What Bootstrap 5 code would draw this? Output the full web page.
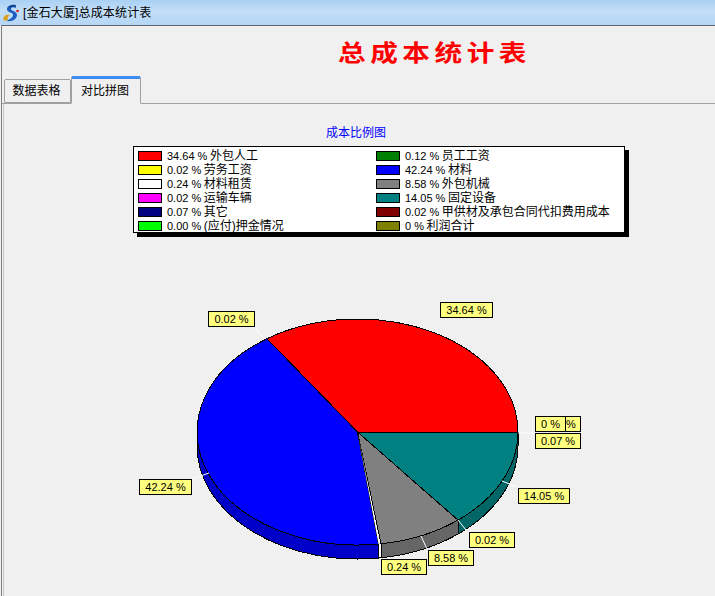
<!DOCTYPE html>
<html lang="zh">
<head>
<meta charset="utf-8">
<title>总成本统计表</title>
<link href="https://cdn.jsdelivr.net/npm/bootstrap@5.3.0/dist/css/bootstrap.min.css" rel="stylesheet">
<style>
html,body{height:596px;overflow:hidden;}
body{background:#f0f0f0;color:#000;font-family:"Liberation Sans","Noto Sans CJK SC",sans-serif;font-size:12px;line-height:14px;}
.titlebar{height:25px;background:linear-gradient(#a9d0f3,#c3dff8 45%,#b5d6f5);padding-left:2px;gap:2px;}
.titlebar span{letter-spacing:.15px;}
.winbody{border-top:1px solid #5f6870;border-left:1px solid #7a7f85;margin-left:1px;height:571px;}
.bigtitle{height:50px;padding:13px 0 0 336px;}
.bigtitle span{display:inline-block;font-size:23px;line-height:24px;font-weight:700;letter-spacing:3.8px;color:#f00;transform:scaleX(1.2);transform-origin:left center;font-family:"Noto Sans CJK SC",sans-serif;}
.wintabs{height:28px;padding-left:2px;border-bottom:1px solid #a0a0a0;align-items:flex-end;flex-wrap:nowrap;}
.wintabs .nav-link{color:#000;font-size:12px;line-height:14px;border-radius:2px 2px 0 0;text-align:center;background:#f0f0f0;}
.wintabs .tab-a{width:67px;height:24px;border:1px solid #a0a0a0;padding:4px 2px 0 0;margin:0;}
.wintabs .nav-link.tab-b{width:70px;height:28px;border:1px solid #a0a0a0;border-top:3px solid #3c8ff0;border-bottom:1px solid #f0f0f0;padding:5px 2px 0 0;margin:0 0 -1px;background:#f0f0f0;color:#000;}
.pane{border-left:1px solid #c8c8c8;margin-left:1px;padding-top:22px;}
.charttitle{color:#00f;padding-left:322px;height:20px;}
.legendbox{margin-left:129px;width:492px;height:87px;background:#fff;border:1px solid #000;box-shadow:4px 4px 0 #000;display:grid;grid-template-columns:238px 1fr;grid-auto-rows:14px;padding:2px 0 0 4px;}
.legitem{display:flex;align-items:center;white-space:nowrap;}
.swatch{width:24px;height:10px;border:1px solid #000;margin-right:5px;flex:none;}
.pct{font-size:11px;margin-right:2.5px;}
.s1{background:#f00}.s2{background:#008000}.s3{background:#ff0}.s4{background:#00f}.s5{background:#fff}.s6{background:#808080}.s7{background:#f0f}.s8{background:#008080}.s9{background:#000080}.s10{background:#800000}.s11{background:#0f0}.s12{background:#808000}
.piechart{display:block;margin:7px 0 0 -4px;}
.piechart text{font-family:"Liberation Sans",sans-serif;font-size:11px;fill:#000;text-anchor:middle;}
.piechart text.pctonly{text-anchor:start;}
.lab{fill:#ffff80;stroke:#000;stroke-width:1;}
.lead{stroke:#fff;stroke-width:1;fill:none;}
</style>
</head>
<body>
<div class="titlebar d-flex align-items-center">
  <svg width="19" height="20" viewBox="0 0 19 20" aria-hidden="true">
    <path d="M1 16 C2 12 5 11 8 12 C6 13 5 15 6 17 C4 18 2 18 1 16Z" fill="#d9a01c"/>
    <path d="M14 2 C9 1 5 3 5 6 C5 10 11 9 11 12 C11 15 7 16 5 18 C10 19 15 16 15 12 C15 8 9 8 9 6 C9 4 12 4 14 5Z" fill="#1c5fc0"/>
    <path d="M13 2 C10 2 7 3 6.500 5.500 C8 4 10 3.500 13 4Z" fill="#123a80"/>
    <circle cx="15.500" cy="8" r="1.300" fill="#d82020"/>
  </svg>
  <span>[金石大厦]总成本统计表</span>
</div>
<div class="winbody">
  <div class="bigtitle"><span>总成本统计表</span></div>
  <ul class="nav nav-tabs wintabs">
    <li class="nav-item"><a class="nav-link tab-a" href="#">数据表格</a></li>
    <li class="nav-item"><a class="nav-link active tab-b" href="#">对比拼图</a></li>
  </ul>
  <div class="pane">
    <div class="charttitle">成本比例图</div>
    <div class="legendbox">
      <div class="legitem"><i class="swatch s1"></i><span class="pct">34.64 %</span>外包人工</div>
      <div class="legitem"><i class="swatch s2"></i><span class="pct">0.12 %</span>员工工资</div>
      <div class="legitem"><i class="swatch s3"></i><span class="pct">0.02 %</span>劳务工资</div>
      <div class="legitem"><i class="swatch s4"></i><span class="pct">42.24 %</span>材料</div>
      <div class="legitem"><i class="swatch s5"></i><span class="pct">0.24 %</span>材料租赁</div>
      <div class="legitem"><i class="swatch s6"></i><span class="pct">8.58 %</span>外包机械</div>
      <div class="legitem"><i class="swatch s7"></i><span class="pct">0.02 %</span>运输车辆</div>
      <div class="legitem"><i class="swatch s8"></i><span class="pct">14.05 %</span>固定设备</div>
      <div class="legitem"><i class="swatch s9"></i><span class="pct">0.07 %</span>其它</div>
      <div class="legitem"><i class="swatch s10"></i><span class="pct">0.02 %</span>甲供材及承包合同代扣费用成本</div>
      <div class="legitem"><i class="swatch s11"></i><span class="pct">0.00 %</span>(应付)押金情况</div>
      <div class="legitem"><i class="swatch s12"></i><span class="pct">0 %</span>利润合计</div>
    </div>
    <svg class="piechart" width="715" height="360" viewBox="0 240 715 360">
      <g stroke="#000" stroke-width="1" shape-rendering="crispEdges">
        <path d="M197 432 A160.5 113 0 0 0 378.5 544.03 L378.5 558.03 A160.5 113 0 0 1 197 446Z" fill="#0000c8"/>
        <path d="M378.5 544.03 L381 543.8 L381 557.8 L378.5 558.03Z" fill="#fff"/>
        <path d="M381 543.8 A160.5 113 0 0 0 458 520.1 L458 534.1 A160.5 113 0 0 1 381 557.8Z" fill="#666"/>
        <path d="M458 520.1 A160.5 113 0 0 0 518 432 L518 446 A160.5 113 0 0 1 458 534.1Z" fill="#006666"/>
        <path d="M357.5 432 L518 432 A160.5 113 0 0 0 267 338.7Z" fill="#f00"/>
        <path d="M357.5 432 L267 338.7 A160.5 113 0 0 0 378.5 544.03Z" fill="#00f"/>
        <path d="M357.5 432 L458 520.1 A160.5 113 0 0 1 381 543.8Z" fill="#808080"/>
        <path d="M357.5 432 L518 432 A160.5 113 0 0 1 458 520.1Z" fill="#008080"/>
      </g>
      <path d="M357.5 432 L378.500 544 L380 544Z" fill="#fff"/>
      <path class="lead" d="M518 433H535M502 481L517 487M209 473L192 479M255 328L264 338M421 536L427 549M458 520L466 530"/>
      <rect class="lab" x="440.5" y="302.5" width="52" height="15"/><text x="466.5" y="314">34.64 %</text>
      <rect class="lab" x="208.5" y="311.5" width="46" height="15"/><text x="231.5" y="323">0.02 %</text>
      <rect class="lab" x="535.5" y="416.5" width="45" height="15"/>
      <rect class="lab" x="535.5" y="416.5" width="30" height="15"/><text x="550.5" y="428">0 %</text><text class="pctonly" x="566" y="428">%</text>
      <rect class="lab" x="535.5" y="433.5" width="45" height="15"/><text x="558" y="445">0.07 %</text>
      <rect class="lab" x="518.5" y="488.5" width="51" height="15"/><text x="544" y="500">14.05 %</text>
      <rect class="lab" x="469.5" y="532.5" width="45" height="15"/><text x="492" y="544">0.02 %</text>
      <rect class="lab" x="428.5" y="550.5" width="45" height="15"/><text x="451" y="562">8.58 %</text>
      <rect class="lab" x="381.5" y="559.5" width="45" height="15"/><text x="404" y="571">0.24 %</text>
      <rect class="lab" x="139.5" y="479.5" width="52" height="15"/><text x="165.5" y="491">42.24 %</text>
    </svg>
  </div>
</div>
</body>
</html>
